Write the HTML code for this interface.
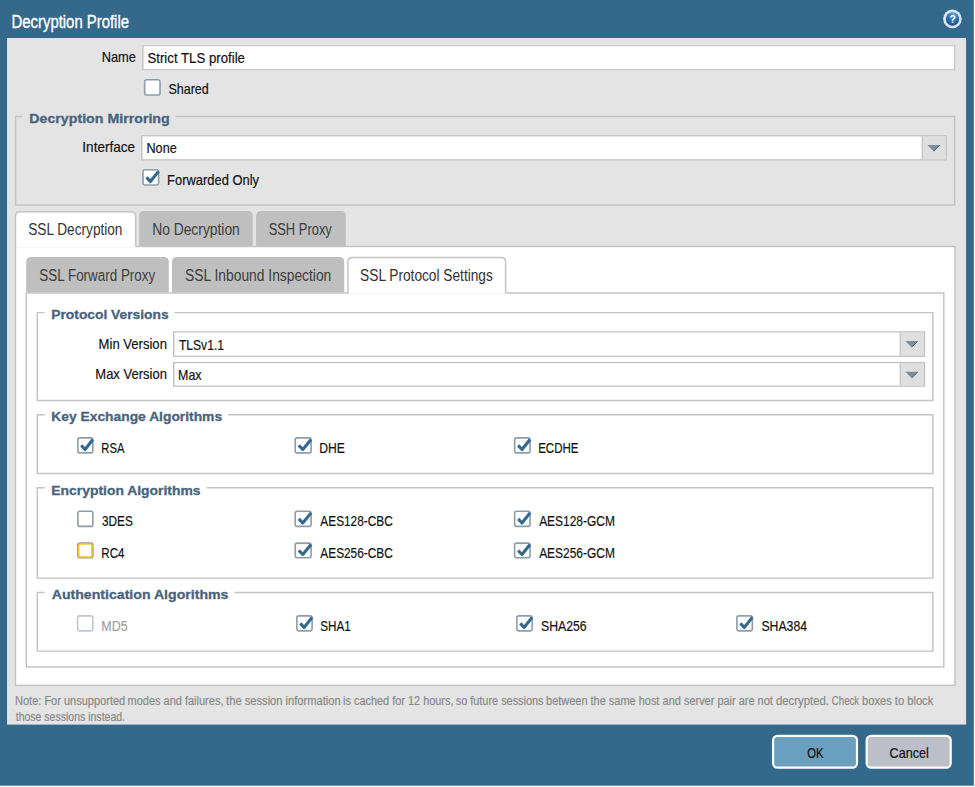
<!DOCTYPE html>
<html><head><meta charset="utf-8"><title>Decryption Profile</title><style>
html,body{margin:0;padding:0;background:#fff;}
body{width:975px;height:787px;position:relative;overflow:hidden;font-family:"Liberation Sans",sans-serif;}
.a{position:absolute;}
text{font-family:"Liberation Sans",sans-serif;}
</style></head><body>
<svg class="a" style="left:0;top:0;" width="975" height="787" viewBox="0 0 975 787">
<defs><radialGradient id="hg" cx="0.55" cy="0.2" r="0.85"><stop offset="0" stop-color="#6aa6d6"/><stop offset="0.45" stop-color="#2f75b2"/><stop offset="1" stop-color="#0f4d88"/></radialGradient></defs>
<rect x="0.00" y="0.00" width="973.85" height="785.70" fill="#34698c" />
<rect x="7.05" y="38.00" width="959.05" height="686.60" fill="#e4e4e4" />
<circle cx="952.4" cy="18.9" r="9.3" fill="#dbe3f1"/><circle cx="952.5" cy="19" r="6.7" fill="url(#hg)"/>
<text x="952.7" y="22.8" text-anchor="middle" font-family="Liberation Sans" font-weight="bold" font-size="10.5" fill="#fff">?</text>
<rect x="142.10" y="45.10" width="813.20" height="25.30" fill="#c8caca" />
<rect x="143.70" y="46.25" width="810.20" height="22.65" fill="#fff" />
<path d="M22.8 116.5 L15.55 116.5 L15.55 205.05 L954.6 205.05 L954.6 116.5 L175.5 116.5" fill="none" stroke="#c3c3c3" stroke-width="1.45"/>
<rect x="141.00" y="135.10" width="805.90" height="25.40" fill="#c2c4c4" />
<rect x="142.50" y="136.40" width="803.10" height="22.80" fill="#fff" />
<rect x="921.60" y="136.40" width="24.00" height="22.80" fill="#c2c4c4" />
<rect x="922.90" y="136.40" width="22.70" height="22.80" fill="#dfdfdf" />
<path d="M927.25 144.90 L940.25 144.90 L933.75 151.50 Z" fill="#7d8f9d"/>
<path d="M933.75 151.20 L939.65 145.20" stroke="#4d5f6e" stroke-width="0.9" fill="none"/>
<rect x="15.50" y="246.50" width="939.40" height="438.85" fill="#fff" stroke="#c3c3c3" stroke-width="1.45" />
<path d="M139.20 245.90 L139.20 216.00 Q139.20 211.00 144.20 211.00 L247.70 211.00 Q252.70 211.00 252.70 216.00 L252.70 245.90 Z" fill="#bfbfbf"/>
<path d="M256.10 245.90 L256.10 216.00 Q256.10 211.00 261.10 211.00 L340.80 211.00 Q345.80 211.00 345.80 216.00 L345.80 245.90 Z" fill="#bfbfbf"/>
<path d="M15.50 247.30 L15.50 216.20 Q15.50 211.70 20.00 211.70 L131.10 211.70 Q135.60 211.70 135.60 216.20 L135.60 247.30 Z" fill="#fff"/>
<path d="M15.50 247.30 L15.50 216.20 Q15.50 211.70 20.00 211.70 L131.10 211.70 Q135.60 211.70 135.60 216.20 L135.60 246.60" fill="none" stroke="#c3c3c3" stroke-width="1.45"/>
<rect x="26.25" y="293.00" width="917.55" height="373.95" fill="#fff" stroke="#c3c3c3" stroke-width="1.45" />
<path d="M26.20 292.40 L26.20 262.10 Q26.20 257.10 31.20 257.10 L163.80 257.10 Q168.80 257.10 168.80 262.10 L168.80 292.40 Z" fill="#bfbfbf"/>
<path d="M172.00 292.40 L172.00 262.10 Q172.00 257.10 177.00 257.10 L339.20 257.10 Q344.20 257.10 344.20 262.10 L344.20 292.40 Z" fill="#bfbfbf"/>
<path d="M347.90 293.80 L347.90 262.00 Q347.90 257.50 352.40 257.50 L501.10 257.50 Q505.60 257.50 505.60 262.00 L505.60 293.80 Z" fill="#fff"/>
<path d="M347.90 293.80 L347.90 262.00 Q347.90 257.50 352.40 257.50 L501.10 257.50 Q505.60 257.50 505.60 262.00 L505.60 293.10" fill="none" stroke="#c3c3c3" stroke-width="1.45"/>
<path d="M44.7 312.6 L37.3 312.6 L37.3 400.4 L932.9 400.4 L932.9 312.6 L174.7 312.6" fill="none" stroke="#c3c3c3" stroke-width="1.45"/>
<path d="M44.7 414.8 L37.3 414.8 L37.3 473.5 L932.9 473.5 L932.9 414.8 L228.2 414.8" fill="none" stroke="#c3c3c3" stroke-width="1.45"/>
<path d="M44.7 487.8 L37.3 487.8 L37.3 578.1 L932.9 578.1 L932.9 487.8 L206.6 487.8" fill="none" stroke="#c3c3c3" stroke-width="1.45"/>
<path d="M44.7 592.5 L37.3 592.5 L37.3 651.1 L932.9 651.1 L932.9 592.5 L234.6 592.5" fill="none" stroke="#c3c3c3" stroke-width="1.45"/>
<rect x="173.00" y="331.20" width="752.20" height="25.80" fill="#c2c4c4" />
<rect x="174.50" y="332.50" width="749.40" height="23.20" fill="#fff" />
<rect x="899.60" y="332.50" width="24.30" height="23.20" fill="#c2c4c4" />
<rect x="900.90" y="332.50" width="23.00" height="23.20" fill="#dfdfdf" />
<path d="M905.25 341.00 L918.25 341.00 L911.75 347.60 Z" fill="#7d8f9d"/>
<path d="M911.75 347.30 L917.65 341.30" stroke="#4d5f6e" stroke-width="0.9" fill="none"/>
<rect x="173.00" y="361.90" width="752.20" height="24.90" fill="#c2c4c4" />
<rect x="174.50" y="363.20" width="749.40" height="22.30" fill="#fff" />
<rect x="899.60" y="363.20" width="24.30" height="22.30" fill="#c2c4c4" />
<rect x="900.90" y="363.20" width="23.00" height="22.30" fill="#dfdfdf" />
<path d="M905.25 371.70 L918.25 371.70 L911.75 378.30 Z" fill="#7d8f9d"/>
<path d="M911.75 378.00 L917.65 372.00" stroke="#4d5f6e" stroke-width="0.9" fill="none"/>
<rect x="773.1" y="735.8" width="83.9" height="31.9" rx="4.5" ry="4.5" fill="#6b9fbf" stroke="#fff" stroke-width="2.2"/>
<rect x="866.7" y="735.8" width="84.0" height="31.9" rx="4.5" ry="4.5" fill="#bcbec8" stroke="#fff" stroke-width="2.2"/>
<rect x="144.66" y="79.80" width="15.38" height="15.20" rx="2" ry="2" fill="#fff" stroke="#8d9dab" stroke-width="1.6"/>
<rect x="143.00" y="169.80" width="15.60" height="15.20" rx="2" ry="2" fill="#fff" stroke="#8d9dab" stroke-width="1.6"/>
<path d="M146.54 177.40 L150.43 181.55 L158.56 171.37" fill="none" stroke="#33698f" stroke-width="3.1" stroke-linejoin="round"/>
<rect x="77.90" y="437.90" width="14.95" height="15.00" rx="2" ry="2" fill="#fff" stroke="#8d9dab" stroke-width="1.6"/>
<path d="M81.27 445.40 L85.02 449.50 L92.84 439.44" fill="none" stroke="#33698f" stroke-width="3.1" stroke-linejoin="round"/>
<rect x="295.20" y="437.90" width="15.90" height="15.00" rx="2" ry="2" fill="#fff" stroke="#8d9dab" stroke-width="1.6"/>
<path d="M298.81 445.40 L302.77 449.50 L311.05 439.44" fill="none" stroke="#33698f" stroke-width="3.1" stroke-linejoin="round"/>
<rect x="514.66" y="437.90" width="15.38" height="15.00" rx="2" ry="2" fill="#fff" stroke="#8d9dab" stroke-width="1.6"/>
<path d="M518.14 445.40 L521.99 449.50 L530.01 439.44" fill="none" stroke="#33698f" stroke-width="3.1" stroke-linejoin="round"/>
<rect x="77.90" y="511.30" width="14.95" height="15.10" rx="2" ry="2" fill="#fff" stroke="#8d9dab" stroke-width="1.6"/>
<rect x="295.20" y="511.30" width="15.90" height="15.10" rx="2" ry="2" fill="#fff" stroke="#8d9dab" stroke-width="1.6"/>
<path d="M298.81 518.85 L302.77 522.98 L311.05 512.86" fill="none" stroke="#33698f" stroke-width="3.1" stroke-linejoin="round"/>
<rect x="514.66" y="511.30" width="15.38" height="15.10" rx="2" ry="2" fill="#fff" stroke="#8d9dab" stroke-width="1.6"/>
<path d="M518.14 518.85 L521.99 522.98 L530.01 512.86" fill="none" stroke="#33698f" stroke-width="3.1" stroke-linejoin="round"/>
<rect x="77.90" y="543.10" width="14.95" height="14.70" rx="2" ry="2" fill="#fff" stroke="#8d9dab" stroke-width="1.6"/>
<rect x="78.80" y="544.00" width="13.15" height="12.90" rx="1" ry="1" fill="none" stroke="#f7c61f" stroke-width="1.55"/>
<rect x="295.20" y="543.10" width="15.90" height="14.70" rx="2" ry="2" fill="#fff" stroke="#8d9dab" stroke-width="1.6"/>
<path d="M298.81 550.45 L302.77 554.48 L311.05 544.60" fill="none" stroke="#33698f" stroke-width="3.1" stroke-linejoin="round"/>
<rect x="514.66" y="543.10" width="15.38" height="14.70" rx="2" ry="2" fill="#fff" stroke="#8d9dab" stroke-width="1.6"/>
<path d="M518.14 550.45 L521.99 554.48 L530.01 544.60" fill="none" stroke="#33698f" stroke-width="3.1" stroke-linejoin="round"/>
<rect x="77.60" y="615.85" width="15.25" height="15.00" rx="2" ry="2" fill="#fff" stroke="#c0c8cf" stroke-width="1.6"/>
<rect x="296.87" y="615.85" width="15.23" height="15.00" rx="2" ry="2" fill="#fff" stroke="#8d9dab" stroke-width="1.6"/>
<path d="M300.31 623.35 L304.12 627.45 L312.08 617.39" fill="none" stroke="#33698f" stroke-width="3.1" stroke-linejoin="round"/>
<rect x="516.87" y="615.85" width="15.23" height="15.00" rx="2" ry="2" fill="#fff" stroke="#8d9dab" stroke-width="1.6"/>
<path d="M520.31 623.35 L524.12 627.45 L532.08 617.39" fill="none" stroke="#33698f" stroke-width="3.1" stroke-linejoin="round"/>
<rect x="736.88" y="615.85" width="15.48" height="15.00" rx="2" ry="2" fill="#fff" stroke="#8d9dab" stroke-width="1.6"/>
<path d="M740.39 623.35 L744.25 627.45 L752.33 617.39" fill="none" stroke="#33698f" stroke-width="3.1" stroke-linejoin="round"/>
<text x="11.51" y="28" font-size="18" font-weight="normal" fill="#fff" textLength="117.51" lengthAdjust="spacingAndGlyphs" stroke="#fff" stroke-width="0.35">Decryption Profile</text>
<text x="101.63" y="62" font-size="14.3" font-weight="normal" fill="#111" textLength="34.30" lengthAdjust="spacingAndGlyphs" stroke="#111" stroke-width="0.18">Name</text>
<text x="147.46" y="63" font-size="14.3" font-weight="normal" fill="#111" textLength="97.52" lengthAdjust="spacingAndGlyphs" stroke="#111" stroke-width="0.18">Strict TLS profile</text>
<text x="168.50" y="94" font-size="14.3" font-weight="normal" fill="#111" textLength="40.20" lengthAdjust="spacingAndGlyphs" stroke="#111" stroke-width="0.18">Shared</text>
<text x="29.28" y="123" font-size="13.3" font-weight="bold" fill="#4a637c" textLength="140.45" lengthAdjust="spacingAndGlyphs" stroke="#4a637c" stroke-width="0.3">Decryption Mirroring</text>
<text x="82.37" y="152" font-size="14.3" font-weight="normal" fill="#111" textLength="52.69" lengthAdjust="spacingAndGlyphs" stroke="#111" stroke-width="0.18">Interface</text>
<text x="146.44" y="153" font-size="14.3" font-weight="normal" fill="#111" textLength="30.32" lengthAdjust="spacingAndGlyphs" stroke="#111" stroke-width="0.18">None</text>
<text x="167.12" y="185" font-size="14.3" font-weight="normal" fill="#111" textLength="91.93" lengthAdjust="spacingAndGlyphs" stroke="#111" stroke-width="0.18">Forwarded Only</text>
<text x="28.21" y="235" font-size="16" font-weight="normal" fill="#333" textLength="94.26" lengthAdjust="spacingAndGlyphs" >SSL Decryption</text>
<text x="152.17" y="235" font-size="16" font-weight="normal" fill="#3c3c3c" textLength="87.65" lengthAdjust="spacingAndGlyphs" >No Decryption</text>
<text x="268.64" y="235" font-size="16" font-weight="normal" fill="#3c3c3c" textLength="63.21" lengthAdjust="spacingAndGlyphs" >SSH Proxy</text>
<text x="39.32" y="281" font-size="16" font-weight="normal" fill="#3c3c3c" textLength="115.93" lengthAdjust="spacingAndGlyphs" >SSL Forward Proxy</text>
<text x="185.10" y="281" font-size="16" font-weight="normal" fill="#3c3c3c" textLength="146.16" lengthAdjust="spacingAndGlyphs" >SSL Inbound Inspection</text>
<text x="360.11" y="281" font-size="16" font-weight="normal" fill="#333" textLength="132.71" lengthAdjust="spacingAndGlyphs" >SSL Protocol Settings</text>
<text x="51.31" y="319" font-size="13.3" font-weight="bold" fill="#4a637c" textLength="117.32" lengthAdjust="spacingAndGlyphs" stroke="#4a637c" stroke-width="0.3">Protocol Versions</text>
<text x="98.61" y="349" font-size="14.3" font-weight="normal" fill="#111" textLength="68.31" lengthAdjust="spacingAndGlyphs" stroke="#111" stroke-width="0.18">Min Version</text>
<text x="178.94" y="350" font-size="14.3" font-weight="normal" fill="#111" textLength="45.05" lengthAdjust="spacingAndGlyphs" stroke="#111" stroke-width="0.18">TLSv1.1</text>
<text x="95.31" y="379" font-size="14.3" font-weight="normal" fill="#111" textLength="71.58" lengthAdjust="spacingAndGlyphs" stroke="#111" stroke-width="0.18">Max Version</text>
<text x="178.06" y="380" font-size="14.3" font-weight="normal" fill="#111" textLength="23.52" lengthAdjust="spacingAndGlyphs" stroke="#111" stroke-width="0.18">Max</text>
<text x="51.31" y="421" font-size="13.3" font-weight="bold" fill="#4a637c" textLength="170.81" lengthAdjust="spacingAndGlyphs" stroke="#4a637c" stroke-width="0.3">Key Exchange Algorithms</text>
<text x="101.37" y="453" font-size="14.3" font-weight="normal" fill="#111" textLength="23.00" lengthAdjust="spacingAndGlyphs" stroke="#111" stroke-width="0.18">RSA</text>
<text x="319.29" y="453" font-size="14.3" font-weight="normal" fill="#111" textLength="25.65" lengthAdjust="spacingAndGlyphs" stroke="#111" stroke-width="0.18">DHE</text>
<text x="538.14" y="453" font-size="14.3" font-weight="normal" fill="#111" textLength="40.35" lengthAdjust="spacingAndGlyphs" stroke="#111" stroke-width="0.18">ECDHE</text>
<text x="51.31" y="495" font-size="13.3" font-weight="bold" fill="#4a637c" textLength="149.25" lengthAdjust="spacingAndGlyphs" stroke="#4a637c" stroke-width="0.3">Encryption Algorithms</text>
<text x="101.94" y="526" font-size="14.3" font-weight="normal" fill="#111" textLength="30.82" lengthAdjust="spacingAndGlyphs" stroke="#111" stroke-width="0.18">3DES</text>
<text x="320.35" y="526" font-size="14.3" font-weight="normal" fill="#111" textLength="72.36" lengthAdjust="spacingAndGlyphs" stroke="#111" stroke-width="0.18">AES128-CBC</text>
<text x="539.15" y="526" font-size="14.3" font-weight="normal" fill="#111" textLength="75.70" lengthAdjust="spacingAndGlyphs" stroke="#111" stroke-width="0.18">AES128-GCM</text>
<text x="101.34" y="558" font-size="14.3" font-weight="normal" fill="#111" textLength="23.21" lengthAdjust="spacingAndGlyphs" stroke="#111" stroke-width="0.18">RC4</text>
<text x="320.35" y="558" font-size="14.3" font-weight="normal" fill="#111" textLength="72.36" lengthAdjust="spacingAndGlyphs" stroke="#111" stroke-width="0.18">AES256-CBC</text>
<text x="539.15" y="558" font-size="14.3" font-weight="normal" fill="#111" textLength="75.70" lengthAdjust="spacingAndGlyphs" stroke="#111" stroke-width="0.18">AES256-GCM</text>
<text x="51.72" y="599" font-size="13.3" font-weight="bold" fill="#4a637c" textLength="176.71" lengthAdjust="spacingAndGlyphs" stroke="#4a637c" stroke-width="0.3">Authentication Algorithms</text>
<text x="101.26" y="631" font-size="14.3" font-weight="normal" fill="#a0a0a0" textLength="26.39" lengthAdjust="spacingAndGlyphs" stroke="#a0a0a0" stroke-width="0.18">MD5</text>
<text x="320.34" y="631" font-size="14.3" font-weight="normal" fill="#111" textLength="30.51" lengthAdjust="spacingAndGlyphs" stroke="#111" stroke-width="0.18">SHA1</text>
<text x="541.01" y="631" font-size="14.3" font-weight="normal" fill="#111" textLength="45.69" lengthAdjust="spacingAndGlyphs" stroke="#111" stroke-width="0.18">SHA256</text>
<text x="761.41" y="631" font-size="14.3" font-weight="normal" fill="#111" textLength="45.69" lengthAdjust="spacingAndGlyphs" stroke="#111" stroke-width="0.18">SHA384</text>
<text x="15.03" y="705" font-size="12" font-weight="normal" fill="#888" textLength="110.18" lengthAdjust="spacingAndGlyphs" stroke="#888" stroke-width="0.18">Note: For unsupported</text>
<text x="127.56" y="705" font-size="12" font-weight="normal" fill="#888" textLength="95.89" lengthAdjust="spacingAndGlyphs" stroke="#888" stroke-width="0.18">modes and failures,</text>
<text x="226.12" y="705" font-size="12" font-weight="normal" fill="#888" textLength="114.64" lengthAdjust="spacingAndGlyphs" stroke="#888" stroke-width="0.18">the session information</text>
<text x="343.07" y="705" font-size="12" font-weight="normal" fill="#888" textLength="110.43" lengthAdjust="spacingAndGlyphs" stroke="#888" stroke-width="0.18">is cached for 12 hours,</text>
<text x="455.70" y="705" font-size="12" font-weight="normal" fill="#888" textLength="87.88" lengthAdjust="spacingAndGlyphs" stroke="#888" stroke-width="0.18">so future sessions</text>
<text x="546.06" y="705" font-size="12" font-weight="normal" fill="#888" textLength="113.36" lengthAdjust="spacingAndGlyphs" stroke="#888" stroke-width="0.18">between the same host</text>
<text x="662.59" y="705" font-size="12" font-weight="normal" fill="#888" textLength="110.24" lengthAdjust="spacingAndGlyphs" stroke="#888" stroke-width="0.18">and server pair are not</text>
<text x="775.98" y="705" font-size="12" font-weight="normal" fill="#888" textLength="52.96" lengthAdjust="spacingAndGlyphs" stroke="#888" stroke-width="0.18">decrypted.</text>
<text x="831.85" y="705" font-size="12" font-weight="normal" fill="#888" textLength="27.31" lengthAdjust="spacingAndGlyphs" stroke="#888" stroke-width="0.18">Check</text>
<text x="862.05" y="705" font-size="12" font-weight="normal" fill="#888" textLength="71.17" lengthAdjust="spacingAndGlyphs" stroke="#888" stroke-width="0.18">boxes to block</text>
<text x="15.73" y="721" font-size="12" font-weight="normal" fill="#888" textLength="109.30" lengthAdjust="spacingAndGlyphs" stroke="#888" stroke-width="0.18">those sessions instead.</text>
<text x="807.16" y="758" font-size="14.3" font-weight="normal" fill="#111" textLength="16.33" lengthAdjust="spacingAndGlyphs" stroke="#111" stroke-width="0.18">OK</text>
<text x="889.59" y="758" font-size="14.3" font-weight="normal" fill="#111" textLength="39.15" lengthAdjust="spacingAndGlyphs" stroke="#111" stroke-width="0.18">Cancel</text>
</svg>

</body></html>
